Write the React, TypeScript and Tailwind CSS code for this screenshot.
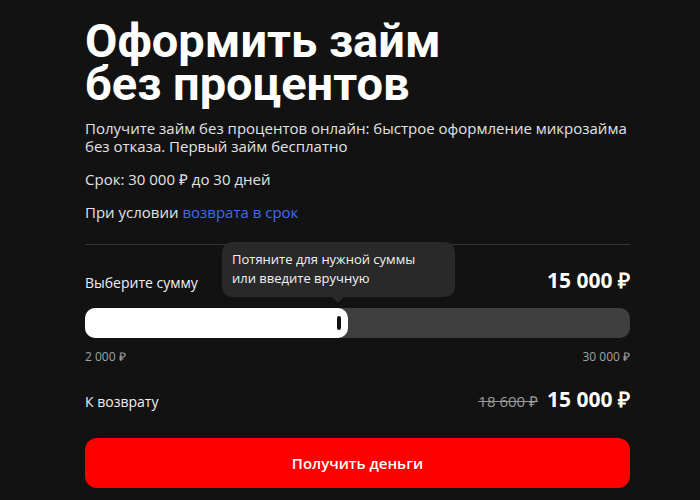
const App: React.FC = () => {
    return (
        <div className="min-h-[500px] w-full bg-[#121212] font-['Open_Sans',sans-serif] text-white">
            <div className="ml-[85px] w-[545px] pt-[19px]">
                <h1 className="font-['Roboto',sans-serif] text-[47px] font-bold leading-[43px]">
                    Оформить займ
                    <br />
                    без процентов
                </h1>

                <p className="mt-[14px] text-[15px] leading-[18px] text-[#e3e3e3]">
                    Получите займ без процентов онлайн: быстрое оформление микрозайма без отказа. Первый займ бесплатно
                </p>
                <p className="mt-[15px] text-[15px] leading-[18px] text-[#e3e3e3]">
                    Срок: 30 000 ₽ до 30 дней
                </p>
                <p className="mt-[15px] text-[15px] leading-[18px] text-[#e3e3e3]">
                    При условии <span className="text-[#3d6cf2]">возврата в срок</span>
                </p>

                <div className="mt-[23px] border-t border-[#333333]" />

                <div className="mt-[23px] flex items-baseline justify-between">
                    <span className="text-[14px] leading-[20px] text-[#f0f0f0]">Выберите сумму</span>
                    <span className="text-[21px] font-bold leading-[24px]">15 000 ₽</span>
                </div>

                <div className="relative mt-[15px]">
                    <div className="absolute left-[137px] top-[-66px] h-[55px] w-[233px] rounded-[10px] bg-[#292929] px-[10px] pt-[8px] text-[13px] leading-[19px] text-[#f2f2f2]">
                        Потяните для нужной суммы
                        <br />
                        или введите вручную
                        <div className="absolute left-[110px] top-[55px] h-0 w-0 border-x-[6px] border-t-[6px] border-x-transparent border-t-[#292929]" />
                    </div>
                    <div className="h-[30px] w-full rounded-[10px] bg-[#3f3f3f]">
                        <div className="flex h-full w-[263px] items-center justify-end rounded-[10px] bg-white pr-[7px]">
                            <div className="h-[14px] w-[4px] rounded-full bg-[#111111]" />
                        </div>
                    </div>
                </div>

                <div className="mt-[12px] flex justify-between text-[12px] leading-[14px] text-[#a3a3a3]">
                    <span>2 000 ₽</span>
                    <span>30 000 ₽</span>
                </div>

                <div className="mt-[23px] flex items-baseline justify-between">
                    <span className="text-[14px] leading-[20px] text-[#f0f0f0]">К возврату</span>
                    <div className="flex items-baseline gap-[9px]">
                        <span className="text-[15px] leading-[20px] text-[#9a9a9a] line-through">18 600 ₽</span>
                        <span className="text-[21px] font-bold leading-[24px]">15 000 ₽</span>
                    </div>
                </div>

                <button className="mt-[26px] flex h-[50px] w-full items-center justify-center rounded-[12px] bg-[#ff0000] text-[15px] font-semibold text-white">
                    Получить деньги
                </button>
            </div>
        </div>
    )
}

export default App;
